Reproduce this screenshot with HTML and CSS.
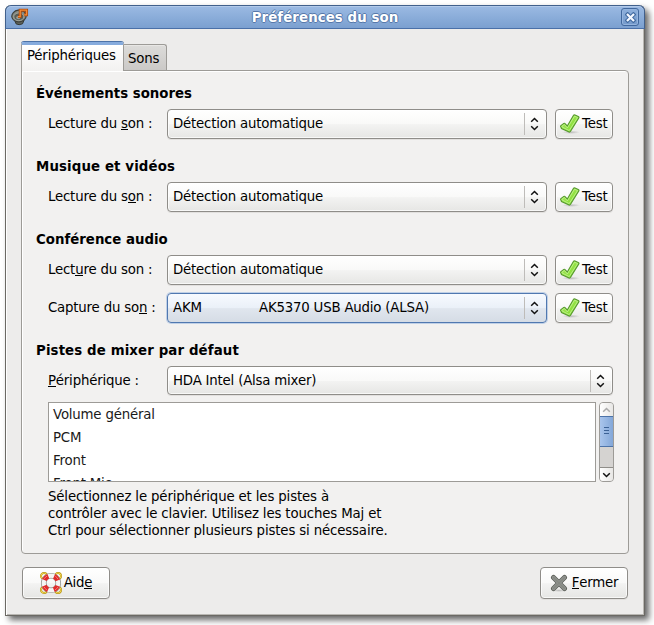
FILE: index.html
```html
<!DOCTYPE html>
<html lang="fr">
<head>
<meta charset="utf-8">
<title>Préférences du son</title>
<link rel="stylesheet" href="styles.css">
</head>
<body>
<svg class="defs" width="0" height="0" aria-hidden="true">
  <defs>
    <linearGradient id="green" x1="0" y1="0" x2="1" y2="1"><stop offset="0" stop-color="#a5e85a"/><stop offset="1" stop-color="#7fdc2c"/></linearGradient>
    <radialGradient id="shade"><stop offset="0" stop-color="#000" stop-opacity=".2"/><stop offset="1" stop-color="#000" stop-opacity="0"/></radialGradient>
    <symbol id="check" viewBox="0 0 20 20">
      <ellipse cx="11" cy="18.300" rx="9" ry="1.700" fill="url(#shade)"/>
      <path d="M.9 11.600 3.800 9.400Q4.700 8.900 5.300 9.800L7.300 12 13.400 1.500Q14 .6 15 1L18.300 2.400Q19.300 2.900 18.800 3.900L10.400 17.500Q9.600 18.500 8.600 17.800L1.900 14.700Q1.300 14.300 1.100 13.500L.6 12.500Q.4 12 .9 11.600Z" fill="url(#green)" stroke="#56982e" stroke-width="1.100"/>
      <path d="M2.100 13 1.900 12.200 4.400 10.500 7.400 13.900 14.500 2.200 17.600 3.500 9.200 16.600Z" fill="none" stroke="#c6f398" stroke-width=".8"/>
    </symbol>
    <symbol id="updown" viewBox="0 0 9 14">
      <path d="M1.200 4.700 4.500 1.500 7.800 4.700M1.200 9.300 4.500 12.500 7.800 9.300" fill="none" stroke="#111" stroke-width="1.500"/>
    </symbol>
  </defs>
</svg>
<div class="window">
  <header class="titlebar">
    <svg class="app-icon" viewBox="0 0 18 18">
      <path d="M3.500 11 5 15.800Q8 17.600 11.500 15.800L13.500 11Z" fill="#60645c" stroke="#343732"/>
      <ellipse cx="8" cy="8" rx="7.200" ry="5.900" transform="rotate(-8 8 8)" fill="#888c84" stroke="#3d403b" stroke-width="1.200"/>
      <ellipse cx="7.800" cy="8.800" rx="5" ry="3.800" fill="#5a5e57" stroke="#a9ada5" stroke-width=".8"/>
      <ellipse cx="7.300" cy="9.600" rx="2.100" ry="1.600" fill="#989c94"/>
      <path d="M7 8.600H9.200V2.200H15.600V6.800H13.200" fill="none" stroke="#a8480c" stroke-width="2.900"/>
      <path d="M7 8.600H9.200V2.200H15.600V6.800H13.200" fill="none" stroke="#f58a36" stroke-width="1.300"/>
    </svg>
    <h1 class="title">Préférences du son</h1>
    <button class="close" aria-label="Fermer la fenêtre">
      <svg viewBox="0 0 12 12"><path d="M2.800 2.800 9.200 9.200M9.200 2.800 2.800 9.200" stroke="#416aa0" stroke-width="4.600" stroke-linecap="square"/><path d="M3 3 9 9M9 3 3 9" stroke="#f4f8ff" stroke-width="2.400" stroke-linecap="square"/></svg>
    </button>
  </header>
  <nav class="tabs">
    <div class="tab tab-active">Périphériques</div>
    <div class="tab">Sons</div>
  </nav>
  <main class="panel">
    <section class="group">
      <h2>Événements sonores</h2>
      <div class="row"><label>Lecture du <u>s</u>on :</label><div class="combo"><span>Détection automatique</span><i><svg><use href="#updown"/></svg></i></div><button class="test"><svg><use href="#check"/></svg><span>Test</span></button></div>
    </section>
    <section class="group">
      <h2 class="wide">Musique et vidéos</h2>
      <div class="row"><label>Lecture du s<u>o</u>n :</label><div class="combo"><span>Détection automatique</span><i><svg><use href="#updown"/></svg></i></div><button class="test"><svg><use href="#check"/></svg><span>Test</span></button></div>
    </section>
    <section class="group">
      <h2>Conférence audio</h2>
      <div class="row"><label>Lect<u>u</u>re du son :</label><div class="combo"><span>Détection automatique</span><i><svg><use href="#updown"/></svg></i></div><button class="test"><svg><use href="#check"/></svg><span>Test</span></button></div>
      <div class="row"><label>Capture du so<u>n</u> :</label><div class="combo combo-focus"><span class="vendor">AKM</span><span>AK5370 USB Audio (ALSA)</span><i><svg><use href="#updown"/></svg></i></div><button class="test"><svg><use href="#check"/></svg><span>Test</span></button></div>
    </section>
    <section class="mixer">
      <h2 class="wide">Pistes de mixer par défaut</h2>
      <div class="row row-device"><label><u>P</u>ériphérique :</label><div class="combo"><span>HDA Intel (Alsa mixer)</span><i><svg><use href="#updown"/></svg></i></div></div>
      <div class="tracks">
        <ul class="list"><li>Volume général</li><li>PCM</li><li>Front</li><li>Front Mic</li></ul>
        <div class="scrollbar">
          <div class="step"><svg viewBox="0 0 9 6"><path d="M1.200 4.700 4.500 1.500 7.800 4.700" stroke="#aaa"/></svg></div>
          <div class="thumb"><b></b><b></b><b></b></div>
          <div class="trough"></div>
          <div class="step step-down"><svg viewBox="0 0 9 6"><path d="M1.200 1.300 4.500 4.500 7.800 1.300" stroke="#111"/></svg></div>
        </div>
      </div>
      <p class="hint">Sélectionnez le périphérique et les pistes à<br>contrôler avec le clavier. Utilisez les touches Maj et<br>Ctrl pour sélectionner plusieurs pistes si nécessaire.</p>
    </section>
  </main>
  <footer class="actions">
    <button class="action"><svg class="help-icon" viewBox="0 0 22 22">
      <g fill="none" stroke="#b38d0c" stroke-width="1.900"><circle cx="4" cy="4" r="3"/><circle cx="18" cy="4" r="3"/><circle cx="4" cy="18" r="3"/><circle cx="18" cy="18" r="3"/></g>
      <g fill="none" stroke="#f5dc55" stroke-width=".9"><circle cx="4" cy="4" r="3"/><circle cx="18" cy="4" r="3"/><circle cx="4" cy="18" r="3"/><circle cx="18" cy="18" r="3"/></g>
      <circle cx="11" cy="11" r="7.300" fill="none" stroke="#888a85" stroke-width="5.600"/>
      <circle cx="11" cy="11" r="7.300" fill="none" stroke="#f5f5f3" stroke-width="4.200"/>
      <circle cx="11" cy="11" r="7.300" fill="none" stroke="#e02a2a" stroke-width="5" stroke-dasharray="5.600 5.867" stroke-dashoffset="-2.933"/>
      <circle cx="11" cy="11" r="8" fill="none" stroke="#f98078" stroke-width="1" stroke-dasharray="4 8.566" stroke-dashoffset="-4.283"/>
    </svg><span>Aid<u>e</u></span></button>
    <button class="action"><svg class="cross-icon" viewBox="0 0 18 18"><ellipse cx="9" cy="16.500" rx="8" ry="1.500" fill="url(#shade)"/><path d="M3.500 3.500 14.500 14.500M14.500 3.500 3.500 14.500" stroke="#5d605a" stroke-width="5" stroke-linecap="round"/><path d="M3.500 3.500 14.500 14.500M14.500 3.500 3.500 14.500" stroke="#969994" stroke-width="3.200" stroke-linecap="round"/><path d="M3.500 3.500 14.500 14.500M14.500 3.500 3.500 14.500" stroke="#858882" stroke-width="1.700" stroke-linecap="round"/></svg><span><u>F</u>ermer</span></button>
  </footer>
</div>
</body>
</html>
```
FILE: styles.css
```css
* { box-sizing: border-box; }
body {
  margin: 0;
  padding: 5px;
  height: 625px;
  overflow: hidden;
  background: #fff;
  color: #000;
  font: 13.333px/17px "DejaVu Sans", sans-serif;
  letter-spacing: -.2px;
}
.defs { position: absolute; }
svg { display: block; flex: none; }
u { text-decoration: none; box-shadow: inset 0 -1px #000; display: inline-block; height: 15px; line-height: 17px; vertical-align: top; }
button { font: inherit; letter-spacing: inherit; color: inherit; padding: 0; margin: 0; }
h1, h2, p, ul { margin: 0; padding: 0; }

.window {
  width: 640px;
  height: 611px;
  display: flex;
  flex-direction: column;
  background: #edeceb;
  border: 1px solid #6b6964;
  border-top: 0;
  border-radius: 6px 6px 0 0;
  box-shadow: inset 1px 0 #fff, inset -1px -1px #b9b7b3, 4px 4px 6px rgba(0, 0, 0, .6);
}
.titlebar {
  height: 24px;
  margin: 0 -1px;
  flex: none;
  display: grid;
  grid-template-columns: 32px 1fr 32px;
  align-items: center;
  background: linear-gradient(#9bbae3, #7ba0d0);
  border: 1px solid #41608c;
  border-bottom-color: #4a70a8;
  border-radius: 6px 6px 0 0;
  box-shadow: inset 0 1px #b2caea;
}
.app-icon { width: 18px; height: 18px; margin-left: 5px; }
.title {
  text-align: center;
  font-size: 13.333px;
  font-weight: bold;
  letter-spacing: .08px;
  color: #fff;
  text-shadow: 1px 0 #5779aa, -1px 0 #5779aa, 0 1px #5779aa, 0 -1px #5779aa;
}
.close {
  width: 18px;
  height: 18px;
  margin-left: 9px;
  display: grid;
  place-items: center;
  background: linear-gradient(#8eb0dc, #7499ca);
  border: 1px solid #41689e;
  border-radius: 3px;
  box-shadow: inset 0 0 0 1px #94b4de;
}
.close svg { width: 11px; height: 11px; }

.tabs {
  display: flex;
  align-items: flex-end;
  height: 41px;
  padding-left: 15px;
  flex: none;
}
.tab {
  width: 43px;
  height: 26px;
  padding: 5px 0 0 4px;
  background: linear-gradient(#dddcda, #cbc9c7);
  border: 1px solid #9d9b97;
  border-left: 0;
  border-bottom: 0;
  border-radius: 0 3px 0 0;
  box-shadow: inset 0 1px #e8e7e5;
}
.tab-active {
  width: 103px;
  height: 29px;
  margin-bottom: -1px;
  padding: 2px 0 0 5px;
  position: relative;
  background: linear-gradient(#fff, #f2f1f0);
  border: 1px solid #9d9b97;
  border-top: 3px solid #86abdd;
  border-bottom: 0;
  border-radius: 3px 3px 0 0;
  box-shadow: 0 -1px #4d73a8;
}
.panel {
  height: 484px;
  width: 608px;
  margin-left: 15px;
  padding: 14px 14px 0;
  flex: none;
  background: #f2f1f0;
  border: 1px solid #9d9b97;
  border-radius: 0 4px 4px 4px;
  box-shadow: inset 1px 1px #fff;
}
h2 { font-size: 13.333px; font-weight: bold; letter-spacing: 0; height: 17px; margin-bottom: 7px; }
h2.wide { letter-spacing: .12px; }
.group { margin-bottom: 19px; }
.row { display: flex; height: 30px; margin-left: 12px; }
.row + .row { margin-top: 8px; }
.row label { width: 119px; padding-top: 6px; flex: none; white-space: nowrap; }
.combo, .test, .action {
  border: 1px solid #8f8d89;
  border-radius: 4px;
  background: linear-gradient(#fff, #f9f9f8 50%, #f3f3f2 52%, #e6e6e4);
  box-shadow: inset 0 0 0 1px rgba(255, 255, 255, .7), 0 1px #e2e0de;
}
.combo { width: 380px; display: flex; align-items: center; padding: 0 0 2px 5px; white-space: pre; }
.combo-focus {
  border-color: #5078b0;
  background: linear-gradient(#f7faff, #eaf0f8 50%, #e0e6ee 52%, #d5dce5);
  box-shadow: 0 0 0 1px #c0d0e6;
}
.combo i {
  margin-left: auto;
  height: 22px;
  width: 22px;
  margin-top: 2px;
  padding: 4px 0 0 5px;
  border-left: 1px solid #bebcb9;
}
.combo i svg { width: 9px; height: 14px; }
.vendor { width: 86px; }
.test { width: 58px; margin-left: 8px; display: flex; align-items: center; padding: 0 0 2px 4px; gap: 2px; }
.test svg { width: 20px; height: 20px; margin-top: 1px; }
.row-device { height: 29px; }
.row-device .combo { width: 446px; padding-bottom: 1px; }
.row-device .combo i { margin-top: 1px; }
.tracks { display: flex; gap: 3px; margin: 7px 0 6px 12px; height: 80px; }
.list {
  width: 548px;
  height: 80px;
  overflow: hidden;
  list-style: none;
  background: #fff;
  border: 1px solid #9d9b97;
  color: #1a1a1a;
}
.list li { height: 23px; line-height: 24px; padding-left: 4px; }
.scrollbar {
  width: 15px;
  display: flex;
  flex-direction: column;
  background: #d5d3d1;
  border: 1px solid #9d9b97;
  border-radius: 4px;
  overflow: hidden;
}
.step { height: 13px; flex: none; display: grid; place-items: center; background: linear-gradient(90deg, #fff, #e8e7e5); }
.step-down { height: 14px; border-top: 1px solid #8f8d89; }
.step svg { width: 9px; height: 6px; fill: none; stroke-width: 1.5; }
.thumb {
  height: 31px;
  margin: 0 -1px;
  flex: none;
  display: flex;
  flex-direction: column;
  align-items: center;
  padding-top: 10px;
  gap: 2px;
  background: linear-gradient(90deg, #a9c5ec, #83a7d8);
  border: 1px solid #4d73a8;
}
.thumb b { width: 5px; height: 1px; background: #3c6296; }
.trough { flex: 1; }
.hint { margin-left: 12px; white-space: nowrap; letter-spacing: -.15px; }
.actions { display: flex; justify-content: space-between; padding: 13px 16px 0; }
.action { width: 88px; height: 32px; display: flex; align-items: center; justify-content: center; gap: 2px; padding-bottom: 1px; }
.help-icon { width: 22px; height: 22px; }
.cross-icon { width: 18px; height: 18px; margin-right: 2px; }
```
